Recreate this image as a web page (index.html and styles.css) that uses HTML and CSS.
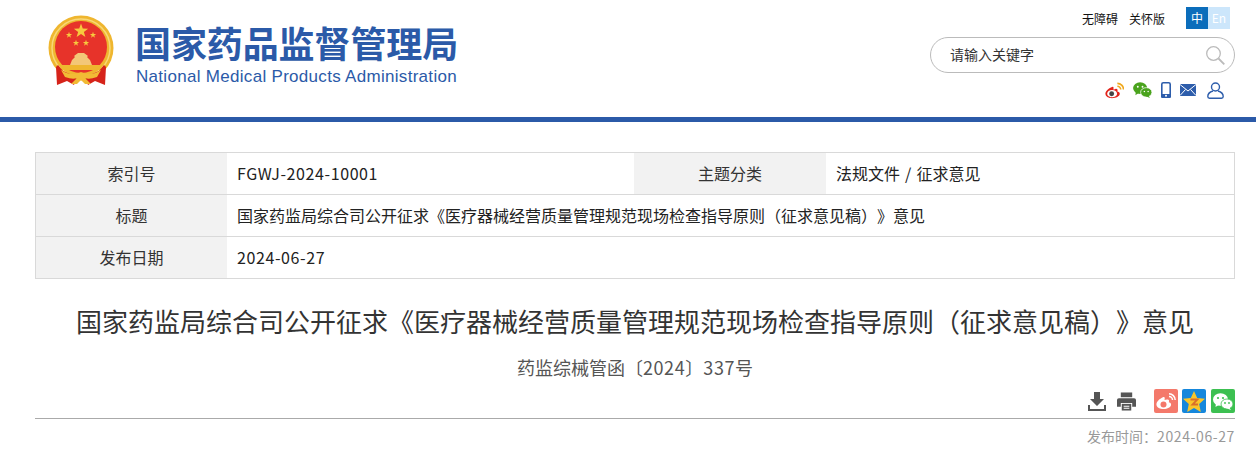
FILE: index.html
```html
<!DOCTYPE html>
<html lang="zh-CN">
<head>
    <meta charset="UTF-8">
    <title>国家药品监督管理局</title>
    <link rel="stylesheet" href="styles.css">
</head>
<body>

    <header class="header">
        <div class="logo">
            <svg class="emblem" width="68" height="71" viewBox="0 0 68 71">
                <defs>
                    <path id="star" d="M0 -10 L2.350 -3.240 L9.510 -3.090 L3.800 1.240 L5.880 8.090 L0 4 L-5.880 8.090 L-3.800 1.240 L-9.510 -3.090 L-2.350 -3.240 Z"/>
                </defs>
                <circle cx="34" cy="33" r="32.500" fill="#efb62f"/>
                <circle cx="34" cy="33" r="29" fill="none" stroke="#f8d877" stroke-width="1.500"/>
                <circle cx="34" cy="32" r="26" fill="#e7332a"/>
                <g fill="#f7c93e">
                    <use href="#star" transform="translate(34,16) scale(.75)"/>
                    <use href="#star" transform="translate(22,20) scale(.33)"/>
                    <use href="#star" transform="translate(46,20) scale(.33)"/>
                    <use href="#star" transform="translate(29,28) scale(.33)"/>
                    <use href="#star" transform="translate(39,28) scale(.33)"/>
                </g>
                <path d="M25 45 L28 42 L27 41 L31 38 H37 L41 41 L40 42 L43 45 L45 50 H23 Z" fill="#f3c777"/>
                <path d="M13 50 H55 L54 55 H14 Z" fill="#efb62f"/>
                <path d="M11 50 L9 52 L10 70 L20 66 L27 70 L30 62 L16 56 Z" fill="#d6231a"/>
                <path d="M57 50 L59 52 L58 70 L48 66 L41 70 L38 62 L52 56 Z" fill="#d6231a"/>
                <path d="M14 55 Q24 62 34 57 Q44 62 54 55 L50 62 Q42 65 38 63 L44 69 H38 L34 65 L30 69 H24 L30 63 Q26 65 18 62 Z" fill="#f2bb35"/>
            </svg>
            <div class="logo-text">
                <div class="logo-cn">国家药品监督管理局</div>
                <div class="logo-en">National Medical Products Administration</div>
            </div>
        </div>
        <div class="tools">
            <div class="top-links">
                <a>无障碍</a>
                <a>关怀版</a>
                <div class="lang"><span class="lang-zh">中</span><span class="lang-en">En</span></div>
            </div>
            <div class="search">
                <span>请输入关键字</span>
                <svg width="19" height="19" viewBox="0 0 19 19" fill="none" stroke="#bbb">
                    <circle cx="7.500" cy="7.500" r="6.800" stroke-width="1.300"/>
                    <path d="M12.500 12.500 L18.300 18.300" stroke-width="1.800"/>
                </svg>
            </div>
            <div class="social">
                <svg width="19" height="17" viewBox="0 0 20 17">
                    <path d="M8 4.500 C3 6.500 0 9.500 .5 12.500 C1 15.500 5 17 9 16.500 C13 16 16 14 15.500 11.500 C15.300 10.300 13.800 9.800 13 9.600 C13.700 8 13 6.300 11 6.800 C10 7.100 9 7.400 8.800 7.400 C9.200 5.300 9 4.100 8 4.500 Z" fill="#e2231a"/>
                    <ellipse cx="7.500" cy="11.800" rx="5.200" ry="3.800" fill="#fff"/>
                    <circle cx="7" cy="12" r="2.600" fill="#444"/>
                    <path d="M13 4 A3.500 3.500 0 0 1 16.500 7.500 M13 1 A6.500 6.500 0 0 1 19.500 7.500" fill="none" stroke="#f0a81c" stroke-width="1.700"/>
                </svg>
                <svg width="19" height="16" viewBox="0 0 20 17">
                    <ellipse cx="7.500" cy="6.500" rx="7.500" ry="6.300" fill="#4aa31d"/>
                    <path d="M3 10 L2.500 14 L7 11 Z" fill="#4aa31d"/>
                    <ellipse cx="14" cy="11" rx="6" ry="5" fill="#4aa31d" stroke="#fff" stroke-width=".8"/>
                    <path d="M16 14 L18 17 L13 15 Z" fill="#4aa31d"/>
                    <circle cx="5" cy="5" r="1" fill="#fff"/><circle cx="10" cy="5" r="1" fill="#fff"/>
                    <circle cx="12" cy="10" r=".8" fill="#fff"/><circle cx="16" cy="10" r=".8" fill="#fff"/>
                </svg>
                <svg width="10" height="16" viewBox="0 0 10 16">
                    <rect x=".8" y=".8" width="8.400" height="14.400" rx="1.500" fill="none" stroke="#2d5dab" stroke-width="1.600"/>
                    <path d="M0 12 H10 V14.500 Q10 16 8.500 16 H1.500 Q0 16 0 14.500 Z" fill="#2d5dab"/>
                    <circle cx="5" cy="13.800" r="1" fill="#fff"/>
                </svg>
                <svg width="16" height="12" viewBox="0 0 16 12">
                    <rect width="16" height="12" fill="#2d5dab"/>
                    <path d="M0 .5 L8 7 L16 .5 M0 11.500 L5.500 5.500 M16 11.500 L10.500 5.500" fill="none" stroke="#fff" stroke-width="1"/>
                </svg>
                <svg class="user" width="17" height="17" viewBox="0 0 17 17" fill="none" stroke="#2d5dab" stroke-width="1.400">
                    <circle cx="8.500" cy="5" r="4"/>
                    <path d="M6 9 C2.500 10 .8 12 .8 14.500 Q.8 16.200 2.500 16.200 H14.500 Q16.200 16.200 16.200 14.500 C16.200 12 14.500 10 11 9"/>
                </svg>
            </div>
        </div>
    </header>

    <div class="main">
        <table class="info">
            <tr>
                <th>索引号</th>
                <td class="val-short num">FGWJ-2024-10001</td>
                <th class="th-second">主题分类</th>
                <td class="val-words">法规文件 / 征求意见</td>
            </tr>
            <tr>
                <th>标题</th>
                <td colspan="3">国家药监局综合司公开征求《医疗器械经营质量管理规范现场检查指导原则（征求意见稿）》意见</td>
            </tr>
            <tr>
                <th>发布日期</th>
                <td colspan="3" class="num">2024-06-27</td>
            </tr>
        </table>

        <h1 class="title">国家药监局综合司公开征求《医疗器械经营质量管理规范现场检查指导原则（征求意见稿）》意见</h1>
        <p class="doc-no">药监综械管函〔<span class="num">2024</span>〕<span class="num">337</span>号</p>

        <div class="actions">
            <svg class="download" width="18" height="19" viewBox="0 0 18 19" fill="#555">
                <path d="M6 0 H12 V7 H16 L9 14 L2 7 H6 Z"/>
                <path d="M0 13 H2 V17 H16 V13 H18 V19 H0 Z"/>
            </svg>
            <svg class="print" width="19" height="19" viewBox="0 0 20 19">
                <path d="M4 0 H16 V5 H4 Z" fill="#555"/>
                <path d="M2 6 H18 Q20 6 20 8 V15 H16 V11 H4 V15 H0 V8 Q0 6 2 6 Z" fill="#555"/>
                <path d="M5 12 H15 V19 H5 Z" fill="#555"/>
                <path d="M7 14 H13 V15 H7 Z M7 16 H13 V17 H7 Z" fill="#fff"/>
            </svg>
            <div class="share share-weibo">
                <svg width="20" height="17" viewBox="0 0 20 17">
                    <path d="M7.500 4 C3 6 0 9 .5 12 C1 15 5 16.500 9 16 C13 15.500 15.500 13.500 15 11 C14.800 10 13.500 9.500 12.800 9.300 C13.500 7.500 12.800 6 11 6.500 L8.500 7 C9 5 8.800 3.500 7.500 4 Z" fill="#fff"/>
                    <circle cx="7.500" cy="11.500" r="3" fill="#f4796b"/>
                    <path d="M13 3.500 A3.500 3.500 0 0 1 16.500 7 M13 .8 A6.300 6.300 0 0 1 19.200 7" fill="none" stroke="#fff" stroke-width="1.500"/>
                </svg>
            </div>
            <div class="share share-qzone">
                <svg width="22" height="21" viewBox="0 0 22 21">
                    <path d="M11 0 L14.200 7 L22 7.800 L16.200 13 L17.800 21 L11 17 L4.200 21 L5.800 13 L0 7.800 L7.800 7 Z" fill="#f8c52a"/>
                    <path d="M7.500 8.500 H14.500 L9.500 13.500 H15" fill="none" stroke="#d9702a" stroke-width="1.800"/>
                </svg>
            </div>
            <div class="share share-wechat">
                <svg width="20" height="17" viewBox="0 0 20 17">
                    <ellipse cx="7.500" cy="6.500" rx="7.500" ry="6.300" fill="#fff"/>
                    <path d="M3 10 L2.500 14 L7 11 Z" fill="#fff"/>
                    <ellipse cx="14" cy="11" rx="6" ry="5" fill="#fff" stroke="#3cc051" stroke-width=".8"/>
                    <path d="M16 14 L18 17 L13 15 Z" fill="#fff"/>
                    <circle cx="5" cy="5" r="1.100" fill="#3cc051"/><circle cx="10" cy="5" r="1.100" fill="#3cc051"/>
                    <circle cx="12" cy="10" r=".9" fill="#3cc051"/><circle cx="16" cy="10" r=".9" fill="#3cc051"/>
                </svg>
            </div>
        </div>
        <div class="publish-time">发布时间：<span class="num">2024-06-27</span></div>
    </div>

</body>
</html>
```

FILE: styles.css
```css
body {
    margin: 0;
    background: #fff;
    font-family: "Noto Sans CJK SC", "Noto Sans", sans-serif;
    color: #333;
    overflow: hidden;
    text-spacing-trim: space-all;
}
.num {
    letter-spacing: .6px;
}
.header {
    height: 117px;
    border-bottom: 5px solid #2b5aa8;
    display: flex;
    justify-content: space-between;
    padding: 0 21px 0 47px;
}
.logo {
    display: flex;
    align-items: flex-start;
    padding-top: 15px;
}
.emblem {
    margin-right: 21px;
}
.logo-text {
    color: #2b5aa8;
    margin-top: 3px;
    margin-left: -1px;
}
.logo-cn {
    font-size: 36px;
    line-height: 48px;
    font-weight: 700;
    letter-spacing: -.1px;
}
.logo-en {
    font-family: "Liberation Sans", sans-serif;
    font-size: 17px;
    line-height: 20px;
    letter-spacing: .3px;
    margin: 1px 0 0 1px;
}
.tools {
    width: 305px;
    display: flex;
    flex-direction: column;
    align-items: flex-end;
}
.top-links {
    display: flex;
    align-items: center;
    font-size: 12px;
    color: #111;
    margin-top: 7px;
    height: 22px;
}
.top-links a {
    margin-right: 11px;
}
.lang {
    display: flex;
    margin-left: 10px;
    margin-right: 5px;
    line-height: 22px;
    font-size: 12px;
    text-align: center;
}
.lang span {
    width: 22px;
}
.lang-zh {
    background: #0b6dbb;
    color: #fff;
}
.lang-en {
    background: #cce6fb;
    color: #fff;
}
.search {
    box-sizing: border-box;
    width: 305px;
    height: 36px;
    margin-top: 8px;
    border: 1px solid #bbb;
    border-radius: 18px;
    display: flex;
    align-items: center;
    justify-content: space-between;
    padding: 0 9px 2px 19px;
    font-size: 14px;
}
.search svg {
    margin-top: 3px;
}
.social {
    display: flex;
    align-items: center;
    gap: 9px;
    margin-top: 8px;
    margin-right: 11px;
    height: 18px;
}
.social .user {
    margin-left: 2px;
}
.main {
    padding: 30px 21px 0 35px;
}
.info {
    width: 1200px;
    border-collapse: collapse;
    table-layout: fixed;
    font-size: 16px;
    border: 1px solid #d9d9d9;
}
.info th {
    width: 191px;
    background: #f2f2f2;
    font-weight: 400;
    text-align: center;
    padding: 0 0 2px;
}
.info .th-second {
    width: 192px;
}
.info tr {
    height: 42px;
    border-bottom: 1px solid #d9d9d9;
}
.info td {
    padding: 0 10px 2px;
    color: #222;
}
.info .val-short {
    width: 387px;
}
.info .val-words {
    word-spacing: 1.500px;
}
.title {
    margin: 23px 0 0;
    font-size: 26px;
    line-height: 38px;
    font-weight: 400;
    text-align: center;
    width: 1200px;
}
.doc-no {
    margin: 14px 0 0;
    font-size: 18px;
    line-height: 26px;
    text-align: center;
    width: 1200px;
    color: #555;
}
.actions {
    width: 1200px;
    box-sizing: border-box;
    height: 30px;
    border-bottom: 1px solid #aaa;
    display: flex;
    justify-content: flex-end;
    align-items: flex-start;
    margin-top: 9px;
}
.actions svg {
    display: block;
}
.actions .download {
    margin-top: 3px;
    margin-right: 11px;
}
.actions .print {
    margin-top: 3px;
    margin-right: 18px;
}
.share {
    width: 24px;
    height: 24px;
    border-radius: 2px;
    display: flex;
    align-items: center;
    justify-content: center;
}
.share-weibo {
    background: #f4796b;
}
.share-qzone {
    background: #1587dc;
    margin-left: 4px;
}
.share-wechat {
    background: #3cc051;
    margin-left: 5px;
}
.publish-time {
    width: 1200px;
    margin-top: 7px;
    text-align: right;
    font-size: 14px;
    line-height: 20px;
    color: #999;
}
```
